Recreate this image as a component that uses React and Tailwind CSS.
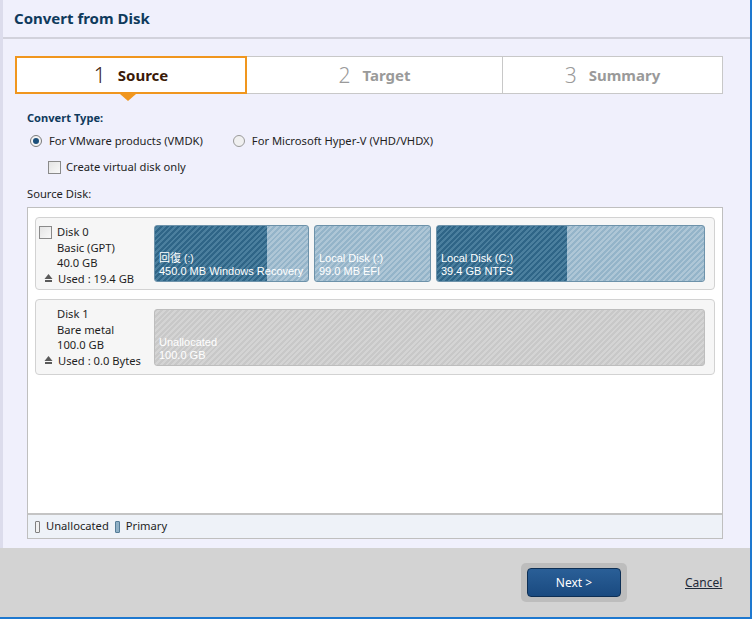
import React from "react";

const font = { fontFamily: '"Noto Sans", "Noto Sans CJK JP", sans-serif' };

function Partition({ w, used, label, sub, kind }) {
  const dark =
    "bg-[repeating-linear-gradient(135deg,#2f6587_0px,#2f6587_2px,#4b7f9e_2px,#4b7f9e_4px)]";
  const light =
    "bg-[repeating-linear-gradient(135deg,#94b4c9_0px,#94b4c9_2px,#aec6d6_2px,#aec6d6_4px)]";
  const gray =
    "bg-[repeating-linear-gradient(135deg,#c8c8c8_0px,#c8c8c8_2px,#d4d4d4_2px,#d4d4d4_4px)]";
  return (
    <div
      className={`relative h-[57px] rounded-[3px] border overflow-hidden ${
        kind === "gray" ? "border-[#bdbdbd] " + gray : "border-[#6d92aa] " + light
      }`}
      style={{ width: w }}
    >
      {used ? (
        <div className={`absolute left-0 top-0 bottom-0 ${dark}`} style={{ width: used }} />
      ) : null}
      <div className="absolute left-[4px] bottom-[3px] text-[11px] leading-[13px] text-white whitespace-nowrap font-['Liberation_Sans','Noto_Sans_CJK_JP',sans-serif]">
        <div>{label}</div>
        <div>{sub}</div>
      </div>
    </div>
  );
}

function UpArrow() {
  return (
    <svg width="9" height="10" viewBox="0 0 9 10" className="mr-[5px]">
      <path d="M4.5 1 L8.5 6 L0.5 6 Z" fill="#5a5a5a" />
      <rect x="1" y="7" width="7" height="2" fill="#5a5a5a" />
    </svg>
  );
}

function Checkbox() {
  return (
    <div className="w-[13px] h-[13px] border border-[#8a8a8a] bg-[linear-gradient(135deg,#e4e4e4,#f8f8f8)] shrink-0" />
  );
}

export default function App() {
  return (
    <div
      className="w-[752px] h-[619px] bg-[#f0f0fc] flex flex-col border-r-2 border-b-2 border-[#1e78cf] overflow-hidden"
      style={font}
    >
      <div className="flex-1 flex flex-col border-l-[3px] border-[#dcdcec]">
        <div className="h-[37px] flex items-center pl-[11px] text-[15px] font-bold text-[#0f3a5c]">
          Convert from Disk
        </div>
        <div className="h-[2px] bg-[#d2d2dc]" />
        <div className="pl-[12px] pr-[27px] mt-[17px]">
          <div className="flex h-[38px] bg-white border border-[#c8c8c8]">
            <div className="relative w-[232px] -ml-px -mt-px -mb-px border-2 border-[#f0961e] flex items-center justify-center bg-white">
              <span className="text-[21px] font-light text-[#3a2010] mr-[12px] leading-none">1</span>
              <span className="text-[15px] font-bold text-[#3a1a08]">Source</span>
              <div className="absolute left-[103px] -bottom-[9px] w-0 h-0 border-l-[8px] border-r-[8px] border-t-[7px] border-l-transparent border-r-transparent border-t-[#f0961e]" />
            </div>
            <div className="w-[256px] flex items-center justify-center border-r border-[#c8c8c8]">
              <span className="text-[21px] font-light text-[#9a9a9a] mr-[12px] leading-none">2</span>
              <span className="text-[15px] font-bold text-[#9a9a9a]">Target</span>
            </div>
            <div className="flex-1 flex items-center justify-center">
              <span className="text-[21px] font-light text-[#9a9a9a] mr-[12px] leading-none">3</span>
              <span className="text-[15px] font-bold text-[#9a9a9a]">Summary</span>
            </div>
          </div>
        </div>
        <div className="pl-[24px] pr-[27px] mt-[14px] flex flex-col text-[11.2px] text-[#1e1e1e]">
          <div className="h-[20px] flex items-center font-bold text-[#0f3a5c] text-[11.1px]">Convert Type:</div>
          <div className="h-[26px] flex items-center">
            <div className="ml-[3px] w-[12px] h-[12px] rounded-full border border-[#7a7a7a] bg-[#f4f4f4] flex items-center justify-center">
              <div className="w-[6px] h-[6px] rounded-full bg-[#1b4f7a]" />
            </div>
            <span className="ml-[7px]">For VMware products (VMDK)</span>
            <div className="ml-[30px] w-[12px] h-[12px] rounded-full border border-[#9a9a9a] bg-[#f0f0f0]" />
            <span className="ml-[7px]">For Microsoft Hyper-V (VHD/VHDX)</span>
          </div>
          <div className="h-[26px] flex items-center pl-[21px]">
            <Checkbox />
            <span className="ml-[5px]">Create virtual disk only</span>
          </div>
          <div className="h-[28px] flex items-center">Source Disk:</div>
          <div className="mt-[-1px] border border-[#bfbfbf] bg-white flex flex-col h-[332px]">
            <div className="flex-1 px-[7px] pt-[9px] flex flex-col gap-[9px]">
              <div className="h-[73px] rounded-[4px] border border-[#d2d2d2] bg-[#f6f6f6] flex items-center pl-[3px] pr-[9px]">
                <div className="w-[115px] h-full flex pt-[8px]">
                  <Checkbox />
                  <div className="ml-[5px] flex flex-col leading-[15.5px] -mt-[2px]">
                    <span>Disk 0</span>
                    <span>Basic (GPT)</span>
                    <span>40.0 GB</span>
                    <span className="flex items-center -ml-[13px]"><UpArrow />Used : 19.4 GB</span>
                  </div>
                </div>
                <div className="flex gap-[5px]">
                  <Partition w={155} used={112} label={<>回復 <span className="text-[10px]">(:)</span></>} sub="450.0 MB Windows Recovery" />
                  <Partition w={117} label="Local Disk (:)" sub="99.0 MB EFI" />
                  <Partition w={269} used={130} label="Local Disk (C:)" sub="39.4 GB NTFS" />
                </div>
              </div>
              <div className="h-[76px] rounded-[4px] border border-[#d2d2d2] bg-[#f6f6f6] flex items-center pl-[3px] pr-[9px]">
                <div className="w-[115px] h-full flex pt-[8px]">
                  <div className="w-[13px]" />
                  <div className="ml-[5px] flex flex-col leading-[15.5px] -mt-[2px]">
                    <span>Disk 1</span>
                    <span>Bare metal</span>
                    <span>100.0 GB</span>
                    <span className="flex items-center -ml-[13px]"><UpArrow />Used : 0.0 Bytes</span>
                  </div>
                </div>
                <Partition w={551} kind="gray" label="Unallocated" sub="100.0 GB" />
              </div>
            </div>
            <div className="h-[25px] border-t-2 border-[#c4c4c4] bg-[#eef2f8] flex items-center pl-[7px]">
              <div className="w-[5px] h-[12px] border border-[#808080] bg-[#f0f0f0] rounded-[1px]" />
              <span className="ml-[6px]">Unallocated</span>
              <div className="ml-[6px] w-[5px] h-[12px] border border-[#557d98] bg-[#8fb0c6] rounded-[1px]" />
              <span className="ml-[6px]">Primary</span>
            </div>
          </div>
        </div>
        <div className="flex-1" />
      </div>
      <div className="h-[69px] bg-[#d3d3d3] flex items-center shrink-0 pl-[521px]">
        <div className="w-[106px] h-[39px] rounded-[5px] bg-[#bdbdbd] flex items-center justify-center">
          <div className="w-[94px] h-[29px] rounded-[4px] border border-[#0d2f55] bg-[linear-gradient(#2a5f97,#1a4a80)] flex items-center justify-center text-white text-[12px]">
            Next &gt;
          </div>
        </div>
        <span className="ml-[58px] text-[12px] text-[#1e2a3a] underline">Cancel</span>
      </div>
    </div>
  );
}
